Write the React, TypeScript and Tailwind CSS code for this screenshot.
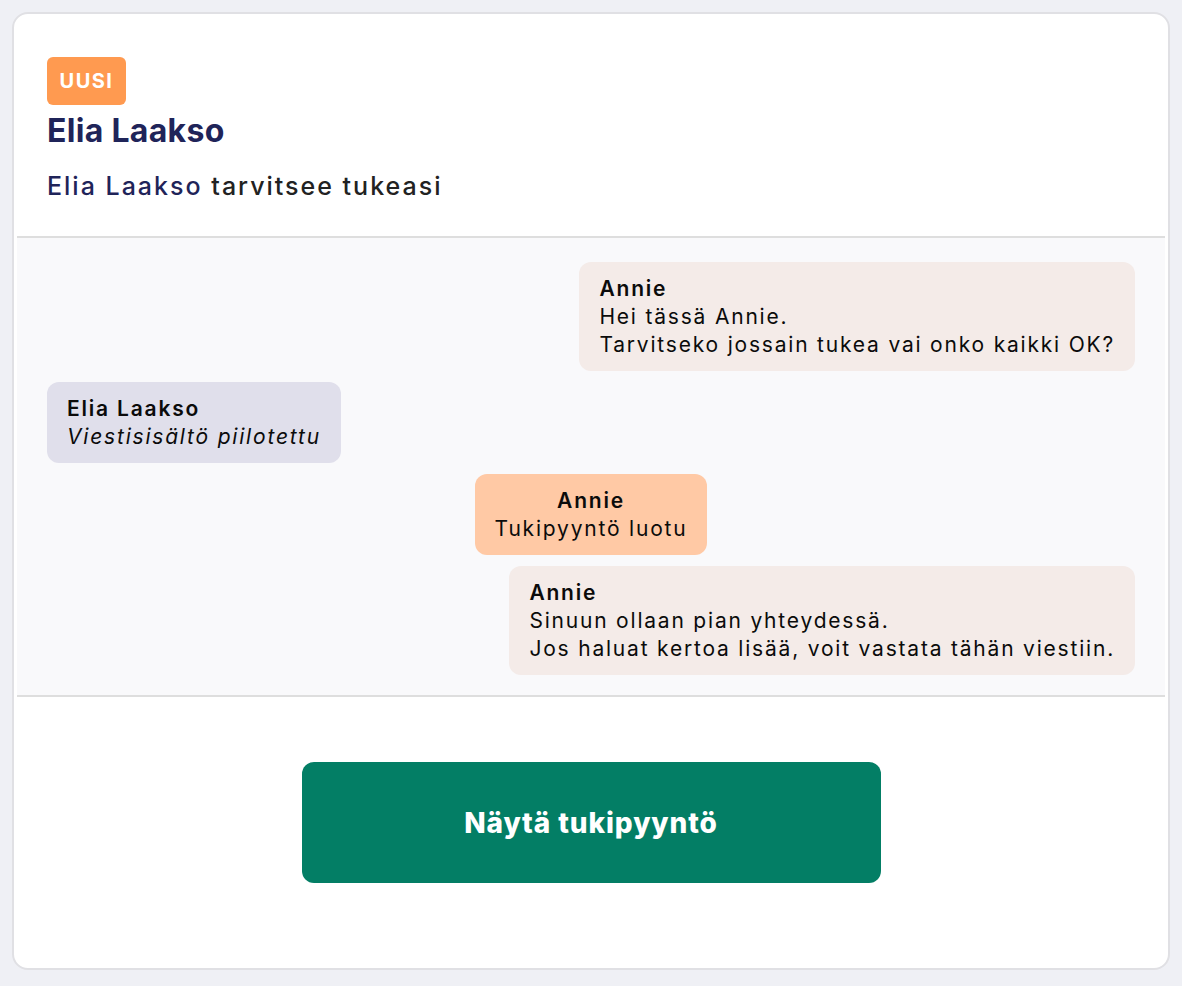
import React from 'react';

type Message = {
  author: string;
  lines: string[];
  side: 'left' | 'right' | 'center';
  hidden?: boolean;
};

const messages: Message[] = [
  {
    author: 'Annie',
    lines: ['Hei tässä Annie.', 'Tarvitseko jossain tukea vai onko kaikki OK?'],
    side: 'right',
  },
  { author: 'Elia Laakso', lines: ['Viestisisältö piilotettu'], side: 'left', hidden: true },
  { author: 'Annie', lines: ['Tukipyyntö luotu'], side: 'center' },
  {
    author: 'Annie',
    lines: ['Sinuun ollaan pian yhteydessä.', 'Jos haluat kertoa lisää, voit vastata tähän viestiin.'],
    side: 'right',
  },
];

function Bubble({ msg }: { msg: Message }) {
  const align =
    msg.side === 'right' ? 'self-end' : msg.side === 'center' ? 'self-center text-center' : 'self-start';
  const bg =
    msg.side === 'left' ? 'bg-[#e0dfeb]' : msg.side === 'center' ? 'bg-[#ffc9a5]' : 'bg-[#f4ebe8]';

  return (
    <div
      className={`${align} ${bg} rounded-[12px] px-[20px] pt-[13px] pb-[12px] text-[21px] leading-[28px] tracking-[1.8px] text-[#0b0b0b]`}
    >
      <p className="font-semibold">{msg.author}</p>
      {msg.lines.map((line) => (
        <p key={line} className={msg.hidden ? 'italic' : ''}>
          {line}
        </p>
      ))}
    </div>
  );
}

export default function App() {
  return (
    <div className="min-h-screen bg-[#eff0f5] p-[12px] font-['Inter',sans-serif]">
      <div className="h-[958px] rounded-[16px] border-2 border-[#e0e0e4] bg-white px-[3px] flex flex-col">
        {/* Header */}
        <div className="px-[30px] pt-[43px] h-[222px]">
          <span className="inline-flex h-[48px] w-[79px] items-center justify-center rounded-[6px] bg-[#ff9a50] text-[20px] font-bold tracking-[1.5px] text-white">
            UUSI
          </span>
          <h1 className="mt-[6px] text-[32px] leading-[40px] font-bold tracking-[0.3px] text-[#1f2459]">
            Elia Laakso
          </h1>
          <p className="mt-[19px] text-[25px] leading-[32px] font-medium tracking-[2px] text-[#222]">
            <span className="text-[#1f2459]">Elia Laakso</span> tarvitsee tukeasi
          </p>
        </div>

        {/* Conversation */}
        <div className="border-y-2 border-[#dedede] bg-[#f9f9fb] px-[30px] pt-[24px] pb-[20px] flex flex-col gap-[11px]">
          {messages.map((m, i) => (
            <Bubble key={i} msg={m} />
          ))}
        </div>

        {/* Action */}
        <div className="flex justify-center pt-[65px]">
          <button className="h-[121px] w-[579px] rounded-[12px] bg-[#037e65] text-[28px] font-extrabold tracking-[0.9px] text-white">
            Näytä tukipyyntö
          </button>
        </div>
      </div>
    </div>
  );
}
